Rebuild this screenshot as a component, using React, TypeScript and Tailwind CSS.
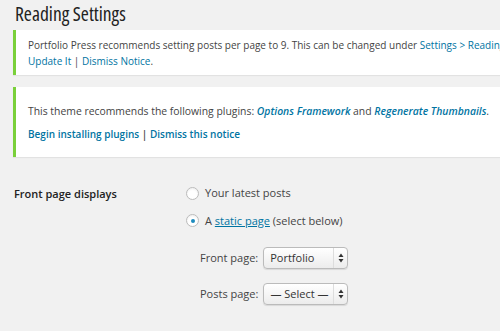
import React from "react";

function SelectBox({ value }: { value: string }) {
  return (
    <div className="flex h-[22px] w-[85px] items-stretch rounded-[4px] border border-[#bbb] bg-gradient-to-b from-white to-[#ececec] shadow-[0_1px_1px_rgba(0,0,0,0.1)]">
      <div className="flex flex-1 items-center pl-[6px] text-[11px] text-[#333]">{value}</div>
      <div className="flex w-[14px] items-center justify-center border-l border-[#ddd]">
        <svg width="6" height="10" viewBox="0 0 6 10">
          <path d="M3 0.5 L5.5 4 L0.5 4 Z" fill="#333" />
          <path d="M3 9.5 L5.5 6 L0.5 6 Z" fill="#333" />
        </svg>
      </div>
    </div>
  );
}

function Radio({ checked }: { checked?: boolean }) {
  return (
    <div className="flex h-[13px] w-[13px] items-center justify-center rounded-full border border-[#bbb] bg-white shadow-[inset_0_1px_2px_rgba(0,0,0,0.07)]">
      {checked && <div className="h-[4px] w-[4px] rounded-full bg-[#1e8cbe]" />}
    </div>
  );
}

export default function App() {
  return (
    <div
      className="h-[331px] w-[500px] overflow-hidden bg-[#f1f1f1] text-[#444]"
      style={{ fontFamily: '"Open Sans", sans-serif' }}
    >
      <div className="pl-[13px]">
        <h1 className="pl-[2px] pt-[1px] text-[19.5px] leading-[26px] text-[#222] font-stretch-[80%]">Reading Settings</h1>
        <div className="mt-[3px] flex h-[45px] w-[600px] flex-col justify-center border-l-[3px] border-[#7ad03a] bg-white pl-[12px] text-[10px] leading-[16px] shadow-[0_1px_1px_rgba(0,0,0,0.06)]">
          <p className="whitespace-nowrap">
            Portfolio Press recommends setting posts per page to 9. This can be changed under{" "}
            <span className="text-[#0074a2]">Settings &gt; Reading</span>
          </p>
          <p className="whitespace-nowrap">
            <span className="text-[#0074a2]">Update It</span> |{" "}
            <span className="text-[#0074a2]">Dismiss Notice</span>.
          </p>
        </div>
        <div className="mt-[12px] flex h-[70px] w-[600px] flex-col justify-center gap-[7px] border-l-[3px] border-[#7ad03a] bg-white pl-[12px] text-[10px] leading-[16px] shadow-[0_1px_1px_rgba(0,0,0,0.06)]">
          <p className="whitespace-nowrap text-[10.4px]">
            This theme recommends the following plugins:{" "}
            <span className="font-semibold italic text-[#0074a2]">Options Framework</span> and{" "}
            <span className="font-semibold italic text-[#0074a2]">Regenerate Thumbnails</span>.
          </p>
          <p className="whitespace-nowrap font-semibold">
            <span className="text-[#0074a2]">Begin installing plugins</span> |{" "}
            <span className="text-[#0074a2]">Dismiss this notice</span>
          </p>
        </div>
        <div className="mt-[27px] flex text-[11px]">
          <div className="w-[173px] pl-[1px] pt-[2px] font-semibold text-[#222]">Front page displays</div>
          <div className="flex flex-col">
            <div className="flex items-center gap-[6px] pt-[1px]">
              <Radio />
              <span>Your latest posts</span>
            </div>
            <div className="mt-[11px] flex items-center gap-[6px]">
              <Radio checked />
              <span>
                A <span className="text-[#0074a2] underline">static page</span> (select below)
              </span>
            </div>
            <div className="mt-[18px] flex flex-col gap-[14px] pl-[14px]">
              <div className="flex items-center gap-[5px]">
                <span>Front page:</span>
                <SelectBox value="Portfolio" />
              </div>
              <div className="flex items-center gap-[5px]">
                <span>Posts page:</span>
                <SelectBox value="— Select —" />
              </div>
            </div>
          </div>
        </div>
      </div>
    </div>
  );
}
